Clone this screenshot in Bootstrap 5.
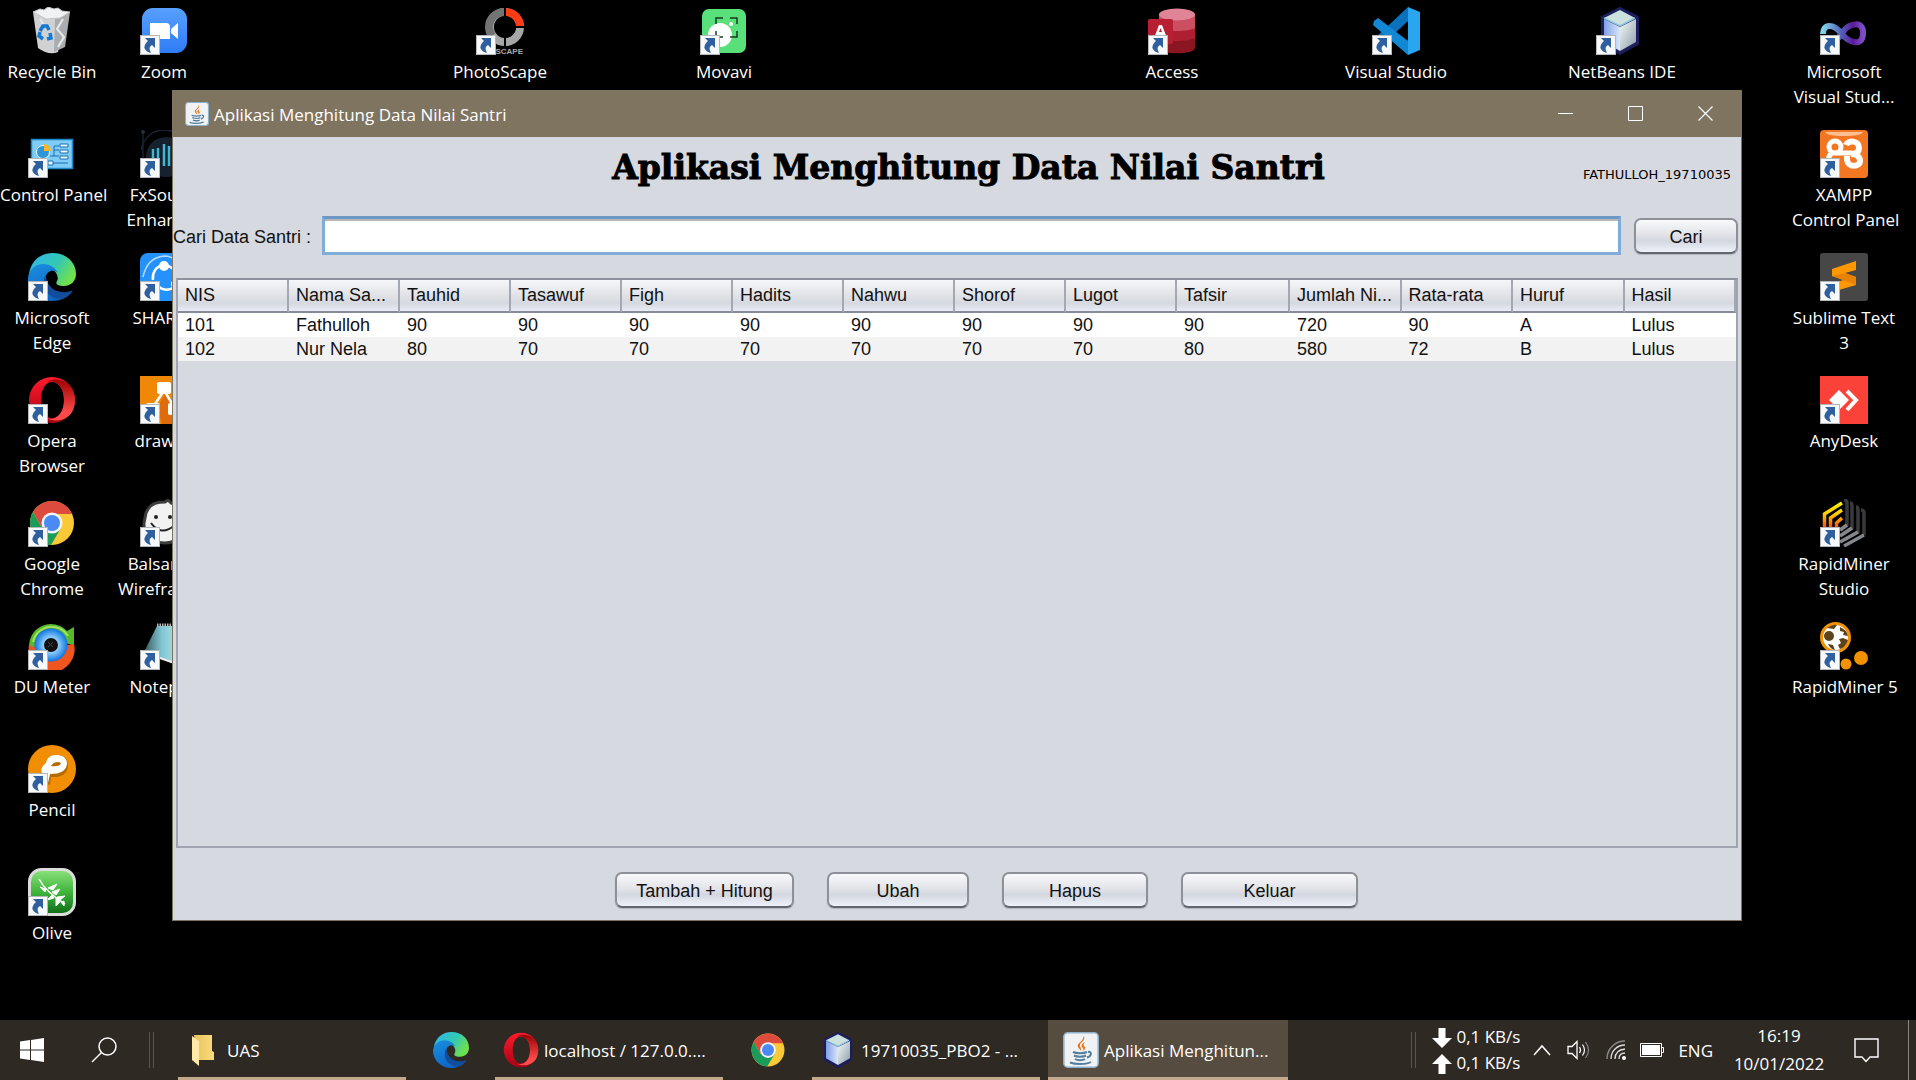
<!DOCTYPE html>
<html lang="id">
<head>
<meta charset="utf-8">
<meta name="viewport" content="width=device-width, initial-scale=1">
<title>Aplikasi Menghitung Data Nilai Santri</title>
<link rel="stylesheet" href="https://cdn.jsdelivr.net/npm/bootstrap@5.3.0/dist/css/bootstrap.min.css">
<script defer src="https://cdn.jsdelivr.net/npm/bootstrap@5.3.0/dist/js/bootstrap.bundle.min.js"></script>
<style>
body{font-family:"Open Sans","Noto Sans",sans-serif;font-size:17px;line-height:25px;color:#fff;background:#000}
.icon-grid{display:grid;grid-template-columns:repeat(17,104px);grid-template-rows:repeat(8,123px);column-gap:8px}
.shortcut{padding-top:7px;color:#fff;text-decoration:none;text-align:center;white-space:nowrap}
.shortcut svg{display:block;width:48px;height:48px;margin:0 auto 4px}
.c1{grid-column:1}.c2{grid-column:2}.c5{grid-column:5}.c7{grid-column:7}.c11{grid-column:11}.c13{grid-column:13}.c15{grid-column:15}.c17{grid-column:17}
.r1{grid-row:1}.r2{grid-row:2}.r3{grid-row:3}.r4{grid-row:4}.r5{grid-row:5}.r6{grid-row:6}.r7{grid-row:7}.r8{grid-row:8}

.app-window{top:90px;left:172px;right:174px;bottom:159px;background:#d6d9e0;border:1px solid #7f7460;color:#111;font-family:"Liberation Sans",Arial,sans-serif;font-size:18px}
.title-bar{height:46px;background:#7f7460;color:#fff;font-family:"Open Sans","Noto Sans",sans-serif;font-size:17px;padding-left:12px}
.title-bar button{width:70px;height:46px;background:none;border:0;color:#fff}
.title-bar button svg{width:16px;height:16px;display:block;margin:auto}
.title-text{padding-left:5px}
.app-head{display:grid;grid-template-columns:1fr auto 1fr;height:79px;padding:13px 10px 0 33px}
.app-head h1{grid-column:2;font-family:"DejaVu Serif",serif;font-weight:700;font-size:33px;line-height:36px;color:#000;-webkit-text-stroke:1px #000}
.author{font-family:"DejaVu Sans",sans-serif;font-size:13px;line-height:25px;padding-top:12px;color:#000}
.search-row{height:39px}
.search-row label{width:149px;padding-top:3px}
.search-box{min-width:0;border:3px solid #7fadd8;border-top-color:#6d98c4;border-radius:0;background:#fff;box-shadow:inset 0 2px 1px #b4b4b8;outline:0;padding:0 8px}
.nimbus{height:36px;border:2px solid #8d9096;border-bottom-color:#63666c;border-radius:7px;color:#111;background:linear-gradient(#f8f9fb,#e2e4e9 45%,#d4d7de 65%,#edf1fa);box-shadow:0 1px 1px #b3b6bd;padding:2px 0 0;line-height:30px}
.w-find{width:104px;margin:0 3px 0 13px}
.w-a{width:179px}.w-b{width:142px}.w-c{width:146px}.w-d{width:177px}
.grid-pane{margin:23px 3px 0;border:2px solid #a0a4ae;border-top-color:#8e929c}
.marks-table{table-layout:fixed;width:100%;border-collapse:separate;border-spacing:0}
.marks-table .narrow{width:111px}
.marks-table .wide{width:113px}
.marks-table th,.marks-table td{padding:0 0 0 7px;font-weight:400;white-space:nowrap;overflow:hidden}
.marks-table th{height:33px;background:linear-gradient(#f6f7f9,#e0e2e7 50%,#d6d9e0 75%,#e8ecf6);border-right:2px solid #a3a8b3;border-bottom:2px solid #858b97}
.marks-table td{height:24px;line-height:24px;background:#fff}
.marks-table tr:nth-child(2) td{background:#f2f2f2}
.actions{gap:33px;padding:24px 0 12px 59px}

.taskbar{left:0;right:0;bottom:0;height:60px;background:#2e2923}
.task{height:60px;border:0;border-bottom:3px solid transparent;background:none;color:#fff;display:flex;align-items:center;padding:3px 0 0;white-space:nowrap}
.task.open{border-bottom-color:#c2a98b;width:228px}
.task.active{background:#574c40;width:240px;margin-left:8px;padding-left:15px}
.bars{width:5px;height:36px;border:solid #59544e;border-width:0 1px}
.t-start{width:64px}
.t-search{width:80px;margin-right:5px}
.t-folder{padding-left:14px}
.t-gap{padding-left:13px}
.t-tight{padding-left:5px}
.t-pin{width:89px}
.tray{padding-right:7px}
.tray-end{width:1px;height:60px;background:#8b8782}
.net{margin-left:16px;line-height:26px}
.net svg{margin-right:4px}
.t-chev{margin-left:13px}
.t-ico{margin-left:16px}
.t-bat,.t-lang{margin-left:14px}
.t-clock{margin-left:16px;width:100px;line-height:28px}
.t-note{margin:0 29px 0 25px}
</style>
</head>
<body>
<svg width="0" height="0" class="position-absolute" aria-hidden="true">
<defs>
<linearGradient id="gBlue" x1="0" y1="0" x2="0" y2="1"><stop offset="0" stop-color="#57a0ff"/><stop offset="1" stop-color="#2f7cf6"/></linearGradient>
<linearGradient id="gEdgeTop" x1="0" y1="0" x2="1" y2=".5"><stop offset="0" stop-color="#2fb5ee"/><stop offset=".6" stop-color="#33c8b4"/><stop offset="1" stop-color="#6fe04e"/></linearGradient>
<linearGradient id="gEdgeMid" x1="0" y1="0" x2=".6" y2="1"><stop offset="0" stop-color="#1b8fe0"/><stop offset="1" stop-color="#0d62c0"/></linearGradient>
<linearGradient id="gOpera" x1="0" y1="0" x2="0" y2="1"><stop offset="0" stop-color="#ff1b2d"/><stop offset="1" stop-color="#a70014"/></linearGradient>
<linearGradient id="gOpera2" x1="0" y1="0" x2="0" y2="1"><stop offset="0" stop-color="#9c0000"/><stop offset=".8" stop-color="#ff4b4b"/></linearGradient>
<linearGradient id="gCubeL" x1="0" y1="0" x2="1" y2="0"><stop offset="0" stop-color="#7fa0e8"/><stop offset="1" stop-color="#d9e6fb"/></linearGradient>
<linearGradient id="gCubeR" x1="0" y1="0" x2="1" y2="1"><stop offset="0" stop-color="#f4f9fb"/><stop offset="1" stop-color="#8b9da6"/></linearGradient>
<linearGradient id="gOlive" x1="0" y1="0" x2="0" y2="1"><stop offset="0" stop-color="#8de27e"/><stop offset=".5" stop-color="#3fb53c"/><stop offset="1" stop-color="#0e6b14"/></linearGradient>
<linearGradient id="gInf" x1="0" y1="0" x2="1" y2="0"><stop offset="0" stop-color="#7fd4e8"/><stop offset=".45" stop-color="#5361b8"/><stop offset=".75" stop-color="#5c1a9c"/><stop offset="1" stop-color="#7d4fc4"/></linearGradient>
<linearGradient id="gNote" x1="0" y1="0" x2="1" y2="0"><stop offset="0" stop-color="#38575f"/><stop offset=".4" stop-color="#7fc6d2"/><stop offset="1" stop-color="#cdeef2"/></linearGradient>
<linearGradient id="gFlame" gradientUnits="userSpaceOnUse" x1="0" y1="4" x2="0" y2="30"><stop offset="0" stop-color="#fdf000"/><stop offset=".4" stop-color="#ffd000"/><stop offset="1" stop-color="#ee4310"/></linearGradient>
<linearGradient id="gFold" x1="0" y1="0" x2="1" y2="0"><stop offset="0" stop-color="#e8c35d"/><stop offset="1" stop-color="#fadb7c"/></linearGradient>
<radialGradient id="gEye"><stop offset="0" stop-color="#111"/><stop offset=".3" stop-color="#0a1c30"/><stop offset=".4" stop-color="#9ad8ff"/><stop offset="1" stop-color="#0e74e0"/></radialGradient>

<symbol id="arrow" viewBox="0 0 20 20"><path d="M0 0h20v20H0z" fill="#b5b8bb"/><path d="M1 1h18v18H1z" fill="#f7f8f9"/><path d="M5 3h10v10l-3-3c-3 2-3 4-1 8-5-1-8-5-6-8 .5-2 2-3 3-4z" fill="#2f5f9f"/></symbol>

<symbol id="edge" viewBox="0 0 48 48"><path d="M1 21C3 8 12 0 25 0c13 0 23 9 23 21 0 7-5 12-12 12-6 0-9-2-7-5 2-3 0-9-5-12C17 11 7 13 1 21z" fill="url(#gEdgeTop)"/><path d="M0 25c1-9 8-14 15-14 7 0 13 4 15 9-2-3-10-4-12 3-2 10 6 20 17 19 3 0 6-1 9-3-5 6-12 9-20 9C11 48 0 38 0 25z" fill="url(#gEdgeMid)"/><path d="M18 22c-6 8 0 24 15 24 5-1 9-4 12-9-5 3-14 3-20-1-5-4-7-9-7-14z" fill="#114d9c"/></symbol>
<symbol id="opera" viewBox="0 0 48 48"><path fill-rule="evenodd" d="M24 1a23 23 0 100 46 23 23 0 000-46zm0 5c7 0 12 8 12 18s-5 18-12 18-11-8-11-18S17 6 24 6z" fill="url(#gOpera)"/><path d="M19 6C24 1 47 2 47 24S25 47 19 42c8 3 17-3 17-18S27 3 19 6z" fill="url(#gOpera2)"/></symbol>
<symbol id="chrome" viewBox="0 0 48 48"><circle cx="24" cy="24" r="22" fill="#fbc936"/><path d="M5 13a22 22 0 0138 0l1 2H24l-10 14z" fill="#dd4b3e"/><path d="M5 13a22 22 0 0018 33l10-17-9 3-10-3z" fill="#1c9c5b"/><circle cx="24" cy="24" r="10.500" fill="#f3f4f6"/><circle cx="24" cy="24" r="8" fill="#4a8af4"/></symbol>
<symbol id="cube" viewBox="0 0 48 48"><path d="M24 1l18 9v27L24 47 6 37V10z" fill="#1c1f5c" stroke="#1c1f5c" stroke-width="2" stroke-linejoin="round"/><path d="M24 3l15 8-15 8L8 11z" fill="#cbe2df"/><path d="M8 12l16 8v24L8 35z" fill="url(#gCubeL)"/><path d="M40 12l-16 8v24l16-9z" fill="url(#gCubeR)"/><path d="M8 11l16 8 15-8" fill="none" stroke="#8ec4dc" stroke-width="1.500"/></symbol>
<symbol id="java" viewBox="0 0 36 36"><rect x=".8" y=".8" width="34.400" height="34.400" rx="4" fill="#f0f2f4" stroke="#8db0cb" stroke-width="1.600"/><path d="M20 4c2 5-7 7-5 11 1 2 2 2 3 4 1-4-3-5 0-8 2-2 5-4 2-7zm3 6c-4 1-6 4-3 6 1 1 0 2-1 3 5-2 3-4 2-5-1-2 0-3 2-4z" fill="#e8761c"/><path d="M10 20c3 1.500 11 1.500 14 0M11 23.500c3 1.500 9 1.500 12 0M12 27c2 1.500 8 1.500 10 0M25 20c4-1 4 4-1 5.500M7 30.500c5 2 17 2 21-.500" fill="none" stroke="#527f9e" stroke-width="2"/></symbol>
<symbol id="start" viewBox="0 0 24 24"><path d="M0 3.500L10 2v9.500H0zM11 2l13-2v11.500H11zM0 12.500h10V22L0 20.500zM11 12.500h13V24l-13-2z" fill="#fff"/></symbol>
</defs>
</svg>

<main class="desktop position-relative vh-100 overflow-hidden">
<nav class="icon-grid" aria-label="Desktop">
<a href="#" class="shortcut c1 r1"><svg viewBox="0 0 48 48"><path d="M5 5l5 36q11 8 20 4l9-38-14 4z" fill="#cfd1d3"/><path d="M27 12l15-7-5 35-11 5z" fill="#a9adb0"/><path d="M5 5l7-3 4 1 4-3 6 2 4-1 4 3 8 1-10 6-14 1z" fill="#f1f2f3" stroke="#c4c7c9"/><path d="M12 12l5 8M35 12l-6 10 7 8-6 10" stroke="#e9eaeb" stroke-width="2" fill="none"/><path d="M12 24l3-5h4l2 4M22 26l1 5-4 1M15 32l-4-3 1-4" stroke="#1479d4" stroke-width="3.500" fill="none"/></svg>Recycle Bin</a>
<a href="#" class="shortcut c2 r1"><svg viewBox="0 0 48 48"><rect x="2" y="1" width="45" height="45" rx="11" fill="url(#gBlue)"/><path d="M10 16h16q4 0 4 4v12H14q-4 0-4-4zM31 22l7-6v16l-7-6z" fill="#fff"/><use href="#arrow" y="28" width="20" height="20"/></svg>Zoom</a>
<a href="#" class="shortcut c5 r1"><svg viewBox="0 0 48 48"><path d="M28 5a15 15 0 00-15 15q0 8-7 14h16l6-3" fill="#737373"/><circle cx="29" cy="20" r="15" fill="none" stroke="#a6a6a6" stroke-width="8"/><path d="M28 5a15 15 0 00-15 15q0 5 3 9" fill="none" stroke="#737373" stroke-width="8"/><path d="M30 5a15 15 0 0114 14" fill="none" stroke="#ff3c16" stroke-width="8"/><circle cx="29" cy="20" r="11" fill="#000"/><path d="M29 0v10M29 31v9M39 20h10" stroke="#000" stroke-width="2"/><text x="47" y="47" text-anchor="end" font-size="8" font-weight="700" font-family="Liberation Sans,sans-serif" fill="#aaa">OSCAPE</text><use href="#arrow" y="28" width="20" height="20"/></svg>PhotoScape</a>
<a href="#" class="shortcut c7 r1"><svg viewBox="0 0 48 48"><rect x="2" y="2" width="44" height="44" rx="7" fill="#59e07a"/><circle cx="20" cy="28" r="12" fill="#fff"/><circle cx="31" cy="17" r="2" fill="#fff"/><path d="M16 17v-6h7M30 11h7v6M37 24v6h-7M23 30h-7v-6" fill="none" stroke="#173a22" stroke-width="1.500"/><use href="#arrow" y="28" width="20" height="20"/></svg>Movavi</a>
<a href="#" class="shortcut c11 r1"><svg viewBox="0 0 48 48"><path d="M11 7v34c0 7 36 7 36 0V7z" fill="#8c1522"/><path d="M11 7v24c6 4 30 4 36 0V7z" fill="#ad1f31"/><path d="M11 7v14c6 4 30 4 36 0V7z" fill="#cb4e61"/><ellipse cx="29" cy="7.500" rx="18" ry="6" fill="#e08497"/><rect y="12" width="25" height="25" rx="2" fill="#b81f33"/><path d="M6 31l5-13h3l5 13h-3l-1-3H10l-1 3zm5-6h3l-1.500-4z" fill="#fff"/><use href="#arrow" y="28" width="20" height="20"/></svg>Access</a>
<a href="#" class="shortcut c13 r1"><svg viewBox="0 0 48 48"><path d="M36 0L2 32l4 5 4 1 26-24z" fill="#0a72bd"/><path d="M36 48L1 18l1-4 4-3 30 23z" fill="#1287d4"/><path d="M36 0l12 5v38l-12 5z" fill="#2aa5ef"/><use href="#arrow" y="28" width="20" height="20"/></svg>Visual Studio<br>Code</a>
<a href="#" class="shortcut c15 r1"><svg viewBox="0 0 48 48"><use href="#cube" width="48" height="48"/><use href="#arrow" y="28" width="20" height="20"/></svg>NetBeans IDE</a>
<a href="#" class="shortcut c17 r1"><svg viewBox="0 0 48 48"><path d="M3 27c0-11 11-10 18-1s21 15 22 1-14-11-20-2-14 14-19 7" fill="none" stroke="url(#gInf)" stroke-width="6"/><use href="#arrow" y="28" width="20" height="20"/></svg>Microsoft<br>Visual Stud...</a>

<a href="#" class="shortcut c1 r2"><svg viewBox="0 0 48 48"><rect x="3.500" y="9.500" width="41" height="29" fill="#7fcdf6" stroke="#1e87c8" stroke-width="1.500"/><circle cx="15" cy="22" r="6.500" fill="#2f95d6" stroke="#e8f7ff"/><path d="M16 21v-7a7 7 0 017 7z" fill="#f7b52c"/><path d="M22 26h4V16h5M26 20h5M26 26h5M22 33h18" stroke="#1a6fb0" fill="none"/><path d="M32 14h8v3h-8zM32 20h8v3h-8zM32 26h8v3h-8zM20 31h5v4h-5z" fill="#e9f8ff" stroke="#1a6fb0"/><use href="#arrow" y="28" width="20" height="20"/></svg>Control Panel</a>
<a href="#" class="shortcut c2 r2"><svg viewBox="0 0 48 48"><path d="M3 2v30M1 20C4 6 14 0 24 0c14 0 24 10 24 24" fill="none" stroke="#172330" stroke-width="1.500"/><circle cx="3" cy="2" r="2" fill="#25303c"/><circle cx="26" cy="27" r="20" fill="#15212c"/><path d="M13 19v15M18 18v18M24 14v22M29 16v20M34 18v16M39 21v10" stroke="#3fb6d2" stroke-width="2.500"/><use href="#arrow" y="28" width="20" height="20"/></svg>FxSound<br>Enhancer</a>
<a href="#" class="shortcut c17 r2"><svg viewBox="0 0 48 48"><rect width="48" height="48" rx="4" fill="#f37623"/><path d="M5 2h38q-2 4-19 4T5 2z" fill="#ffbe90"/><path d="M26 15C28 10 39 10 39 18c0 4-3 6-8 6 6 0 9 3 9 7 0 6-12 7-13-1v-4" fill="none" stroke="#fff" stroke-width="6"/><circle cx="15" cy="17" r="6" fill="none" stroke="#fff" stroke-width="5"/><path d="M15 23h17M14 22q-8 4-4 12" fill="none" stroke="#fff" stroke-width="5"/><use href="#arrow" y="28" width="20" height="20"/></svg>XAMPP<br>Control Panel</a>

<a href="#" class="shortcut c1 r3"><svg viewBox="0 0 48 48"><use href="#edge" width="48" height="48"/><use href="#arrow" y="28" width="20" height="20"/></svg>Microsoft<br>Edge</a>
<a href="#" class="shortcut c2 r3"><svg viewBox="0 0 48 48"><rect width="48" height="48" rx="8" fill="#2492fa"/><path d="M3 24C6 10 14 4 24 3c10 0 19 8 21 21" fill="none" stroke="#b7dcff" stroke-width="1.500"/><path d="M24 12c-9 1-12 9-11 15M28 13c8 3 10 8 9 16M19 34q7 6 17-1" fill="none" stroke="#fff" stroke-width="2.500"/><circle cx="24" cy="13" r="5" fill="#fff"/><circle cx="36" cy="31" r="5" fill="#fff"/><use href="#arrow" y="28" width="20" height="20"/></svg>SHAREit</a>
<a href="#" class="shortcut c17 r3"><svg viewBox="0 0 48 48"><rect width="48" height="48" rx="3" fill="#474747"/><path d="M36 8v9l-11 3 11 4v7L12 23v-7z" fill="#ff9800"/><path d="M36 24v8L12 39v-8l14-5z" fill="#ff9800"/><path d="M12 23l13-3 11 4v8z" fill="#e98203"/><use href="#arrow" y="28" width="20" height="20"/></svg>Sublime Text<br>3</a>

<a href="#" class="shortcut c1 r4"><svg viewBox="0 0 48 48"><use href="#opera" width="48" height="48"/><use href="#arrow" y="28" width="20" height="20"/></svg>Opera<br>Browser</a>
<a href="#" class="shortcut c2 r4"><svg viewBox="0 0 48 48"><rect width="48" height="48" fill="#f08705"/><path d="M25 18l23 24v6H22l-5-16z" fill="#df6c0c"/><path d="M23 16L11 34M25 16l11 18" stroke="#fff" stroke-width="2.500"/><rect x="17" y="6" width="14" height="12" rx="2" fill="#fff"/><rect x="28" y="27" width="14" height="12" rx="2" fill="#fff"/><rect x="6" y="27" width="14" height="12" rx="2" fill="#fff"/><use href="#arrow" y="28" width="20" height="20"/></svg>draw.io</a>
<a href="#" class="shortcut c17 r4"><svg viewBox="0 0 48 48"><path d="M0 0h48v48H0z" fill="#fb4238"/><path d="M19 14l10 10-10 10L9 24z" fill="#fff"/><path d="M27 15l9 9-9 10" fill="none" stroke="#fff" stroke-width="4"/><use href="#arrow" y="28" width="20" height="20"/></svg>AnyDesk</a>

<a href="#" class="shortcut c1 r5"><svg viewBox="0 0 48 48"><use href="#chrome" width="48" height="48"/><use href="#arrow" y="28" width="20" height="20"/></svg>Google<br>Chrome</a>
<a href="#" class="shortcut c2 r5"><svg viewBox="0 0 48 48"><path d="M6 14C10 3 20 3 25 3l3-2 3 3c9 2 14 9 14 20s-8 20-20 20S3 36 4 24z" fill="#f2f2f2" stroke="#3c3c3c" stroke-width="3"/><circle cx="16" cy="18" r="2" fill="#222"/><circle cx="30" cy="18" r="2" fill="#222"/><path d="M11 24q10 14 24 2" fill="none" stroke="#222" stroke-width="2"/><use href="#arrow" y="28" width="20" height="20"/></svg>Balsamiq<br>Wireframes</a>
<a href="#" class="shortcut c17 r5"><svg viewBox="0 0 48 48"><g fill="none" stroke-width="3.500"><path d="M4.500 38V15L22 4M10.500 38V19L22 11M16.500 38V24l5.500-5" stroke="url(#gFlame)"/><path d="M24 1q3 0 3 3v22l-6 5M30 4q2 0 2 3v22l-9 6M36 8q2 0 2 3v22l-14 8M41 11q3 0 3 3v22" stroke="#38393d"/><path d="M20 31l7-5M20 37l12-8M20 43l18-10M24 47l20-11" stroke="#83868a"/></g><use href="#arrow" y="28" width="20" height="20"/></svg>RapidMiner<br>Studio</a>

<a href="#" class="shortcut c1 r6"><svg viewBox="0 0 48 48"><path d="M1 26A22 22 0 0139 9l7-4v18l-16-3z" fill="#57b82c"/><path d="M46 22A23 23 0 111 23l10 4z" fill="#f0551f"/><path d="M5 20A19 19 0 0140 14" fill="none" stroke="#a2e060" stroke-width="2"/><circle cx="23" cy="23" r="16.500" fill="url(#gEye)"/><circle cx="23" cy="23" r="7" fill="#111"/><path d="M20 20l5 5M25 20l-5 5" stroke="#444" stroke-width="1"/><use href="#arrow" y="28" width="20" height="20"/></svg>DU Meter</a>
<a href="#" class="shortcut c2 r6"><svg viewBox="0 0 48 48"><path d="M17 4h28l3 32-14 6L4 30z" fill="url(#gNote)"/><path d="M17 3h28" stroke="#bbb" stroke-width="3" stroke-dasharray="1.500 1"/><path d="M20 36l14 5 6-4" fill="none" stroke="#eee" stroke-width="2"/><use href="#arrow" y="28" width="20" height="20"/></svg>Notepad</a>
<a href="#" class="shortcut c17 r6"><svg viewBox="0 0 48 48"><circle cx="15.500" cy="15.500" r="14" fill="#fff" stroke="#f39200" stroke-width="3"/><circle cx="9" cy="14" r="5" fill="#5c431c"/><path d="M7 6q6-4 10-3l-3 4zM20 5q7 3 8 9l-5-1 1-3-4-1zM19 17l4-1 5 2q-2 7-8 9l-2-4 3-2zM8 22l5 1 2 5q-5-1-7-6z" fill="#5c431c"/><circle cx="41" cy="36" r="7" fill="#f39200"/><circle cx="26" cy="42" r="5.500" fill="#f39200"/><use href="#arrow" y="28" width="20" height="20"/></svg>RapidMiner 5</a>

<a href="#" class="shortcut c1 r7"><svg viewBox="0 0 48 48"><circle cx="24" cy="24" r="24" fill="#f18e04"/><path d="M22 40l1-8q16 1 17-11c0-8-5-11-11-11-7 0-9 4-10 8-5 4-7 7-4 12l2 8z" fill="#7a4700" opacity=".5"/><path fill-rule="evenodd" d="M20 38l2-9q16 0 17-10c0-7-5-9-11-9-6 0-9 3-10 8-5 4-6 8-3 11l1 9zM23 21q4-6 10-3-1 4-10 3z" fill="#fff"/><use href="#arrow" y="28" width="20" height="20"/></svg>Pencil</a>
<a href="#" class="shortcut c1 r8"><svg viewBox="0 0 48 48"><rect x="1.500" y="1.500" width="45" height="45" rx="12" fill="url(#gOlive)" stroke="#dcdcdc" stroke-width="3"/><path d="M11 11q6 12 26 25" fill="none" stroke="#fff" stroke-width="1.500"/><path d="M18 21l-6-2 5 5zM20 20l9-4-4 6zM24 24l8-3-4 6zM24 27l-5 5 7-2zM29 29l8-1-5 4zM28 30l0 8 4-4zM33 34l3 4v-5z" fill="#fff" stroke="#fff"/><use href="#arrow" y="28" width="20" height="20"/></svg>Olive</a>
</nav>

<section class="app-window position-absolute d-flex flex-column" aria-label="Aplikasi">
<header class="title-bar d-flex align-items-center flex-shrink-0">
<svg width="24" height="24"><use href="#java" width="24" height="24"/></svg>
<span class="title-text flex-grow-1">Aplikasi Menghitung Data Nilai Santri</span>
<button type="button" aria-label="Minimize"><svg viewBox="0 0 16 16"><path d="M0 7.500h15" stroke="#fff"/></svg></button>
<button type="button" aria-label="Maximize"><svg viewBox="0 0 16 16"><path d="M.5.500h14v14H.5z" fill="none" stroke="#fff"/></svg></button>
<button type="button" aria-label="Close"><svg viewBox="0 0 16 16"><path d="M.5.500l14 14M14.500.500l-14 14" stroke="#fff" stroke-width="1.200"/></svg></button>
</header>
<div class="app-head flex-shrink-0">
<h1 class="m-0">Aplikasi Menghitung Data Nilai Santri</h1>
<span class="author text-end">FATHULLOH_19710035</span>
</div>
<form class="search-row d-flex align-items-stretch flex-shrink-0">
<label for="cari" class="align-self-center">Cari Data Santri :</label>
<input id="cari" type="text" class="search-box flex-grow-1">
<button type="button" class="nimbus w-find align-self-center">Cari</button>
</form>
<div class="grid-pane flex-grow-1">
<table class="marks-table">
<thead><tr><th class="narrow">NIS</th><th class="narrow">Nama Sa...</th><th class="narrow">Tauhid</th><th class="narrow">Tasawuf</th><th class="narrow">Figh</th><th class="narrow">Hadits</th><th class="narrow">Nahwu</th><th class="narrow">Shorof</th><th class="narrow">Lugot</th><th class="wide">Tafsir</th><th>Jumlah Ni...</th><th>Rata-rata</th><th>Huruf</th><th>Hasil</th></tr></thead>
<tbody>
<tr><td>101</td><td>Fathulloh</td><td>90</td><td>90</td><td>90</td><td>90</td><td>90</td><td>90</td><td>90</td><td>90</td><td>720</td><td>90</td><td>A</td><td>Lulus</td></tr>
<tr><td>102</td><td>Nur Nela</td><td>80</td><td>70</td><td>70</td><td>70</td><td>70</td><td>70</td><td>70</td><td>80</td><td>580</td><td>72</td><td>B</td><td>Lulus</td></tr>
</tbody>
</table>
</div>
<div class="actions d-flex justify-content-center flex-shrink-0">
<button type="button" class="nimbus w-a">Tambah + Hitung</button>
<button type="button" class="nimbus w-b">Ubah</button>
<button type="button" class="nimbus w-c">Hapus</button>
<button type="button" class="nimbus w-d">Keluar</button>
</div>
</section>

<footer class="taskbar position-absolute d-flex align-items-center">
<button type="button" class="task justify-content-center t-start" aria-label="Start"><svg width="24" height="24"><use href="#start" width="24" height="24"/></svg></button>
<button type="button" class="task justify-content-center t-search" aria-label="Search"><svg width="26" height="26" viewBox="0 0 26 26"><circle cx="16.500" cy="9.500" r="8.500" fill="none" stroke="#fff" stroke-width="1.500"/><path d="M10.500 15.500L1 25" stroke="#fff" stroke-width="1.500"/></svg></button>
<span class="bars me-4"></span>
<button type="button" class="task open t-folder"><svg width="22" height="32" viewBox="0 0 22 32"><path d="M2 1h18v16l2 1v8H6z" fill="url(#gFold)"/><path d="M0 2l7 5v25l-7-6z" fill="#ffe9a6"/></svg><span class="t-gap">UAS</span></button>
<button type="button" class="task justify-content-center t-pin" aria-label="Microsoft Edge"><svg width="36" height="36"><use href="#edge" width="36" height="36"/></svg></button>
<button type="button" class="task open ps-2"><svg width="36" height="36"><use href="#opera" width="36" height="36"/></svg><span class="t-tight">localhost / 127.0.0....</span></button>
<button type="button" class="task justify-content-center t-pin" aria-label="Google Chrome"><svg width="36" height="36"><use href="#chrome" width="36" height="36"/></svg></button>
<button type="button" class="task open ps-2"><svg width="36" height="36"><use href="#cube" width="36" height="36"/></svg><span class="t-tight">19710035_PBO2 - ...</span></button>
<button type="button" class="task open active"><svg width="36" height="36"><use href="#java" width="36" height="36"/></svg><span class="t-tight">Aplikasi Menghitun...</span></button>
<div class="tray d-flex align-items-center ms-auto">
<span class="bars"></span>
<div class="net">
<div><svg width="20" height="20" viewBox="0 0 20 20"><path d="M6.500 0h7v10H20L10 20 0 10h6.500z" fill="#fff"/></svg>0,1 KB/s</div>
<div><svg width="20" height="20" viewBox="0 0 20 20"><path d="M6.500 20h7V10H20L10 0 0 10h6.500z" fill="#fff"/></svg>0,1 KB/s</div>
</div>
<svg class="t-chev" width="18" height="12" viewBox="0 0 18 12"><path d="M1 11l8-9 8 9" fill="none" stroke="#fff" stroke-width="1.500"/></svg>
<svg class="t-ico" width="23" height="20" viewBox="0 0 23 20"><path d="M1 6.500h4l5-5v17l-5-5H1z" fill="none" stroke="#fff" stroke-width="1.300"/><path d="M12.500 7q2 3 0 6M15.500 4.500q4 5.500 0 11" fill="none" stroke="#fff" stroke-width="1.200"/><path d="M18.500 2q6 8 0 16" fill="none" stroke="#888" stroke-width="1.200"/></svg>
<svg class="t-ico" width="20" height="20" viewBox="0 0 20 20"><path d="M1 19C1 9 9 1 19 1" fill="none" stroke="#8b8884" stroke-width="1.500"/><path d="M5 19C5 11 11 5 19 5M9 19q0-9 10-10M13 19q0-6 6-6" fill="none" stroke="#ddd" stroke-width="1.300"/><circle cx="18" cy="18" r="2" fill="#fff"/></svg>
<svg class="t-bat" width="24" height="14" viewBox="0 0 24 14"><path d="M.5.500h21v13H.5zM22 4.500h1.500v5H22" fill="none" stroke="#fff"/><path d="M2 2h18v10H2z" fill="#fff"/></svg>
<span class="t-lang">ENG</span>
<time class="t-clock text-center">16:19<br>10/01/2022</time>
<svg class="t-note" width="25" height="25" viewBox="0 0 25 25"><path d="M1 1h23v18h-8l-4 4.500L8 19H1z" fill="none" stroke="#fff" stroke-width="1.400"/></svg>
<span class="tray-end"></span>
</div>
</footer>
</main>
</body>
</html>
